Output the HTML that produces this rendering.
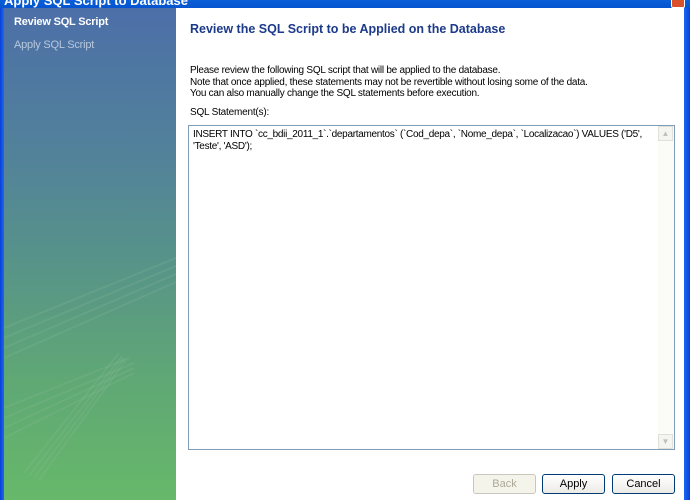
<!DOCTYPE html>
<html><head><style>
body{margin:0;width:690px;height:500px;overflow:hidden;position:relative;font-family:"Liberation Sans",Tahoma,sans-serif;background:#fff}
.title{position:absolute;left:0;top:0;width:690px;height:8px;background:linear-gradient(#0a5fd8,#0553d0);overflow:hidden}
.title span{position:absolute;left:4px;top:-7px;color:#fff;font-weight:bold;font-size:13px}
.close{position:absolute;right:5px;top:-6px;width:12px;height:12px;background:#d8512a;border:1px solid #fff;border-radius:2px}
.lb{position:absolute;left:0;top:8px;width:4px;height:492px;background:linear-gradient(90deg,#0a3fd8,#1a6af0)}
.rb{position:absolute;right:0;top:8px;width:6px;height:492px;background:linear-gradient(90deg,#1a6af0,#0a3fd8)}
.side{position:absolute;left:4px;top:8px;width:172px;height:492px;background:linear-gradient(#4c6fa8 0%,#52829a 30%,#57928a 50%,#5fa775 75%,#67b86a 100%);overflow:hidden}
.side .a{position:absolute;left:10px;top:8px;color:#fff;font-weight:bold;font-size:11px;letter-spacing:-.2px}
.side .b{position:absolute;left:10px;top:31px;color:#b8c8dc;font-size:11px;letter-spacing:-.2px}
h1{position:absolute;left:190px;top:22px;margin:0;font-size:12.5px;color:#1c3a8a;font-weight:bold}
.p{position:absolute;left:190px;top:65px;font-size:10px;line-height:11.5px;color:#000;letter-spacing:-.25px}
.lbl{position:absolute;left:190px;top:107px;font-size:10px;letter-spacing:-.2px}
.box{position:absolute;left:188px;top:125px;width:485px;height:323px;border:1px solid #7f9db9;background:#fff}
.box .t{position:absolute;left:4px;top:3px;width:464px;font-size:10px;line-height:12px;letter-spacing:-.3px}
.sb{position:absolute;right:0;top:0;width:16px;height:100%;background:#fbfbf8}
.sb div{position:absolute;left:0;width:15px;height:15px;border:1px solid #e0e0d8;background:#f4f4f0;box-sizing:border-box;color:#c0c0b8;font-size:8px;text-align:center;line-height:13px}
.btn{position:absolute;top:474px;width:61px;height:18px;border:1px solid #003c74;border-radius:3px;background:linear-gradient(#fff,#ecebe6);font-size:11px;text-align:center;line-height:18px;box-sizing:content-box}
</style></head><body>
<div class="title"><span>Apply SQL Script to Database</span><div class="close"></div></div>
<div class="lb"></div><div class="rb"></div>
<div class="side">
<svg width="172" height="492" style="position:absolute;left:0;top:0" fill="none" stroke="#8fc0a0" stroke-opacity=".2" stroke-width="2">
<path d="M0 320 L172 250 M0 330 L172 258 M0 340 L172 266 M0 350 L172 274"/>
<path d="M0 400 L125 350 M0 410 L130 355 M0 420 L130 360 M0 430 L130 365"/>
<path d="M20 465 L115 345 M25 468 L118 348 M30 470 L120 350 M35 472 L122 352"/>
</svg>
<div class="a">Review SQL Script</div><div class="b">Apply SQL Script</div></div>
<h1>Review the SQL Script to be Applied on the Database</h1>
<div class="p">Please review the following SQL script that will be applied to the database.<br>Note that once applied, these statements may not be revertible without losing some of the data.<br>You can also manually change the SQL statements before execution.</div>
<div class="lbl">SQL Statement(s):</div>
<div class="box"><div class="t">INSERT INTO `cc_bdii_2011_1`.`departamentos` (`Cod_depa`, `Nome_depa`, `Localizacao`) VALUES ('D5', 'Teste', 'ASD');</div>
<div class="sb"><div style="top:0">▲</div><div style="bottom:0">▼</div></div></div>
<div class="btn" style="left:473px;border-color:#c9c7ba;color:#aca899;background:#f5f4ea">Back</div>
<div class="btn" style="left:542px">Apply</div>
<div class="btn" style="left:612px">Cancel</div>
</body></html>
